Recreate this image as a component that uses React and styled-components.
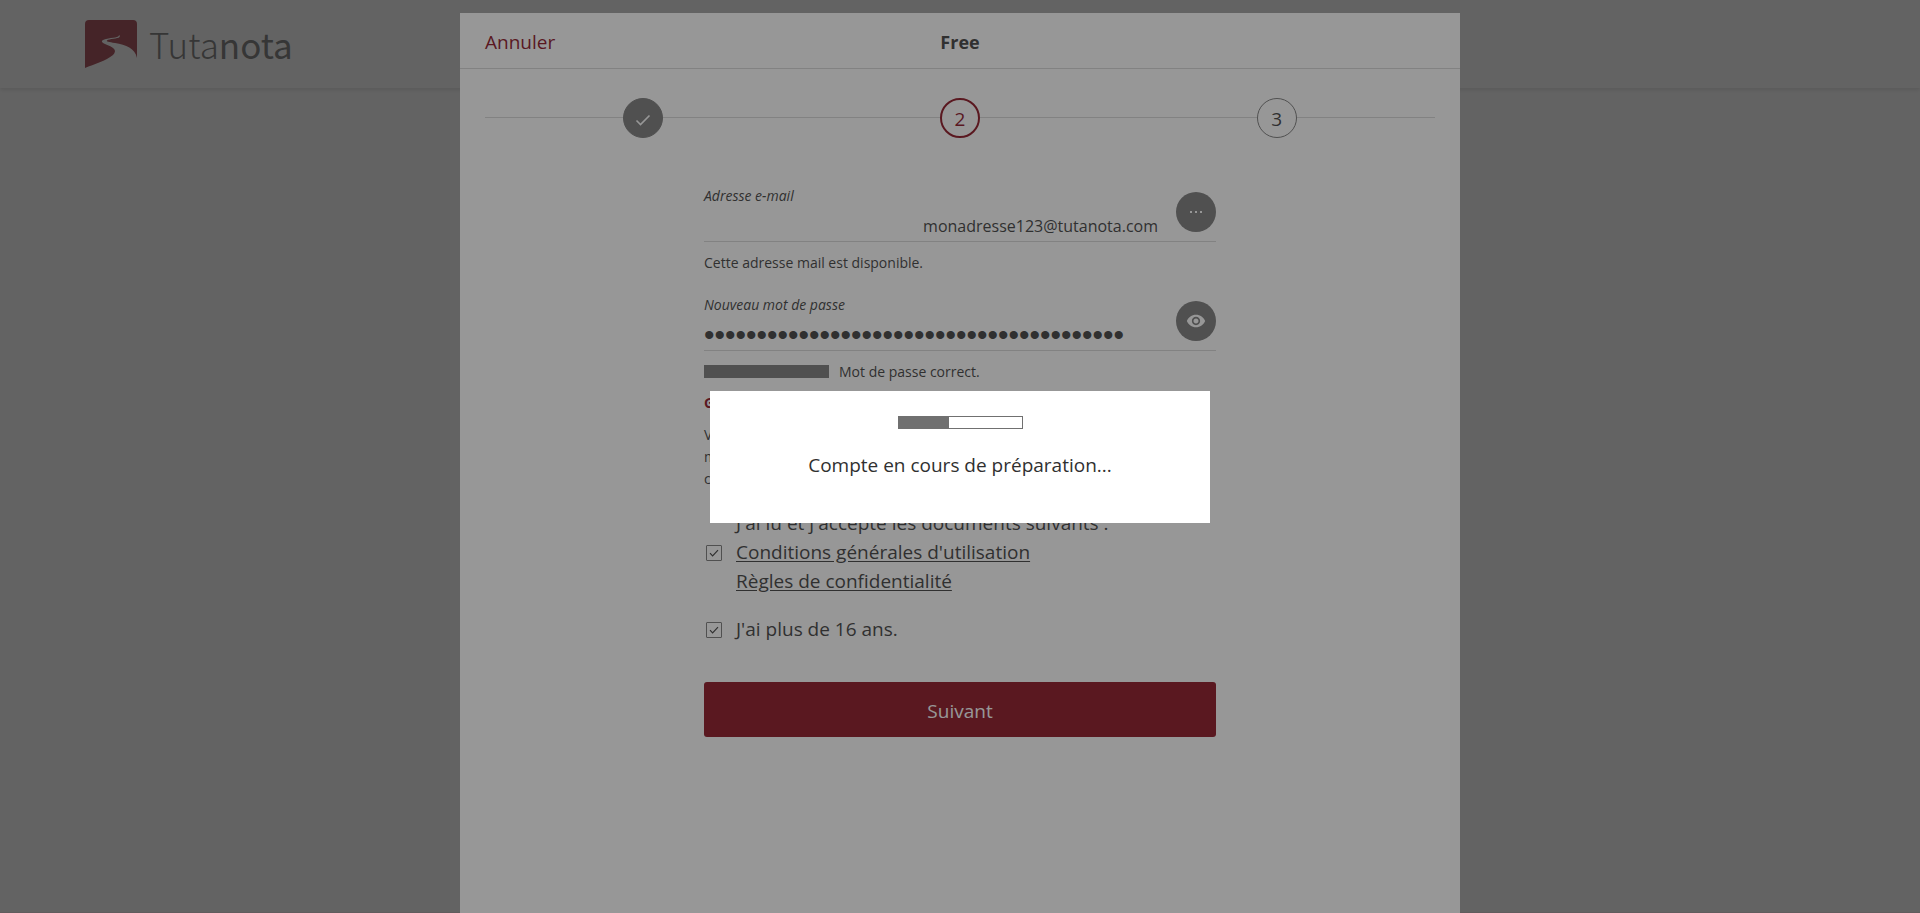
import React, { useState } from 'react';
import styled, { createGlobalStyle } from 'styled-components';

const colors = {
    accent: '#840010',
    text: '#303030',
    button: '#707070',
    line: '#d5d5d5',
    logoText: '#4a4a4a',
    shade: 'rgba(48, 48, 48, 0.5)',
};

const CheckIcon = ({ size }) => (
    <svg width={size} height={size} viewBox="0 0 20 20" fill="none" aria-hidden="true">
        <path d="M3.5 11.5L7.5 15.5L16.5 6.5" stroke="currentColor" strokeWidth="1.6" />
    </svg>
);

const SmallCheckIcon = () => (
    <svg width="12" height="12" viewBox="0 0 12 12" fill="none" aria-hidden="true">
        <path d="M2 6.2L4.6 8.8L10 3.2" stroke="currentColor" strokeWidth="1.2" />
    </svg>
);

const MoreIcon = () => (
    <svg width="20" height="20" viewBox="0 0 20 20" fill="currentColor" aria-hidden="true">
        <rect x="4" y="9" width="2" height="2" />
        <rect x="9" y="9" width="2" height="2" />
        <rect x="14" y="9" width="2" height="2" />
    </svg>
);

const EyeIcon = () => (
    <svg width="20" height="20" viewBox="0 0 24 24" fill="currentColor" aria-hidden="true">
        <path d="M12 4.5C7 4.5 2.73 7.61 1 12c1.73 4.39 6 7.5 11 7.5s9.27-3.11 11-7.5c-1.73-4.39-6-7.5-11-7.5zM12 17c-2.76 0-5-2.24-5-5s2.24-5 5-5 5 2.24 5 5-2.24 5-5 5zm0-8c-1.66 0-3 1.34-3 3s1.34 3 3 3 3-1.34 3-3-1.34-3-3-3z" />
    </svg>
);

const LogoMark = () => (
    <svg width="52" height="48" viewBox="0 0 52 48" fill={colors.accent} aria-hidden="true">
        <path d="M4 0H48Q52 0 52 4V38C50 28 41 25 30 23C24 22 21 21.500 22 20.500C24 18.500 33 19 34.500 17C35.300 16 34.500 15 34 15C34.500 17.500 28 17.500 21 19C16 20 15.500 22 20 24C28 27 33 30 28 35C21 41 9 44 0 48V4Q0 0 4 0Z" />
    </svg>
);

const App = () => {
    const [mail, setMail] = useState('monadresse123');
    const [password, setPassword] = useState('x'.repeat(40));
    const [terms, setTerms] = useState(true);
    const [age, setAge] = useState(true);

    return (
        <Page>
            <GlobalStyle />
            <TopBar>
                <LogoMark />
                <LogoText>
                    Tuta<b>nota</b>
                </LogoText>
            </TopBar>

            <Layer $top>
                <SignupDialog role="dialog" aria-label="Free">
                    <DialogHeader>
                        <CancelButton type="button">Annuler</CancelButton>
                        <DialogTitle>Free</DialogTitle>
                    </DialogHeader>
                    <Steps>
                        <Step>
                            <StepCircle $state="done"><CheckIcon size={20} /></StepCircle>
                        </Step>
                        <Step>
                            <StepCircle $state="current">2</StepCircle>
                        </Step>
                        <Step>
                            <StepCircle>3</StepCircle>
                        </Step>
                    </Steps>
                    <Form onSubmit={(e) => e.preventDefault()}>
                        <Field>
                            <FieldBody>
                                <Label htmlFor="mail">Adresse e-mail</Label>
                                <InputRow>
                                    <Input id="mail" $right value={mail} onChange={(e) => setMail(e.target.value)} />
                                    <Domain>@tutanota.com</Domain>
                                </InputRow>
                            </FieldBody>
                            <RoundButton type="button" aria-label="Plus"><MoreIcon /></RoundButton>
                        </Field>
                        <Helper>Cette adresse mail est disponible.</Helper>

                        <Field>
                            <FieldBody>
                                <Label htmlFor="password">Nouveau mot de passe</Label>
                                <InputRow>
                                    <PasswordInput
                                        id="password"
                                        type="password"
                                        value={password}
                                        onChange={(e) => setPassword(e.target.value)}
                                    />
                                </InputRow>
                            </FieldBody>
                            <RoundButton type="button" aria-label="Afficher"><EyeIcon /></RoundButton>
                        </Field>
                        <Helper>
                            <Meter><MeterFill style={{ width: '100%' }} /></Meter>
                            Mot de passe correct.
                        </Helper>

                        <WarningTitle>Gardez votre mot de passe !</WarningTitle>
                        <Warning>
                            Veuillez bien conserver votre mot de passe. Nous ne<br />
                            mémorisons pas votre mot de passe, il est donc<br />
                            conseillé de le noter.
                        </Warning>

                        <CheckRow>
                            <CheckBox>
                                <input type="checkbox" id="terms" checked={terms} onChange={() => setTerms(!terms)} />
                                {terms && <SmallCheckIcon />}
                            </CheckBox>
                            <CheckText>
                                <label htmlFor="terms">J'ai lu et j'accepte les documents suivants :</label>
                                <a href="#terms">Conditions générales d'utilisation</a>
                                <a href="#privacy">Règles de confidentialité</a>
                            </CheckText>
                        </CheckRow>
                        <CheckRow>
                            <CheckBox>
                                <input type="checkbox" id="age" checked={age} onChange={() => setAge(!age)} />
                                {age && <SmallCheckIcon />}
                            </CheckBox>
                            <CheckText>
                                <label htmlFor="age">J'ai plus de 16 ans.</label>
                            </CheckText>
                        </CheckRow>
                        <SubmitButton type="submit">Suivant</SubmitButton>
                    </Form>
                </SignupDialog>
            </Layer>

            <Layer>
                <ProgressDialog role="alertdialog" aria-label="Progression">
                    <Meter><MeterFill style={{ width: '41%' }} /></Meter>
                    <ProgressText>Compte en cours de préparation...</ProgressText>
                </ProgressDialog>
            </Layer>
        </Page>
    );
};

const GlobalStyle = createGlobalStyle`
    *, *::before, *::after {
        box-sizing: border-box;
    }

    body {
        margin: 0;
        overflow: hidden;
        background: #fff;
    }

    body, button, input {
        font-family: 'Open Sans', 'Noto Sans', sans-serif;
        font-size: 19px;
        color: ${colors.text};
    }

    button, input {
        margin: 0;
        padding: 0;
        border: none;
        background: none;
    }
`;

const Page = styled.div`
    min-height: 100vh;
    border-bottom: 1px solid #f5e0e4;
`;

const TopBar = styled.header`
    display: flex;
    align-items: center;
    gap: 12px;
    height: 88px;
    padding: 0 85px;
    box-shadow: 0 2px 4px rgba(0, 0, 0, 0.16);
`;

const LogoText = styled.span`
    font-family: 'Noto Sans CJK SC', 'Open Sans', sans-serif;
    font-size: 35px;
    line-height: 48px;
    font-weight: 300;
    color: ${colors.logoText};

    b {
        font-weight: 400;
    }
`;

const Layer = styled.div`
    position: fixed;
    inset: 0;
    display: flex;
    justify-content: center;
    align-items: ${props => props.$top ? 'stretch' : 'center'};
    padding-top: ${props => props.$top ? '13px' : '0'};
    background: ${colors.shade};
`;

const SignupDialog = styled.div`
    width: 100%;
    max-width: 1000px;
    background: #fff;
`;

const DialogHeader = styled.div`
    display: grid;
    grid-template-columns: 1fr auto 1fr;
    align-items: center;
    height: 56px;
    padding: 2px 25px 0;
    border-bottom: 1px solid ${colors.line};
`;

const CancelButton = styled.button`
    justify-self: start;
    color: ${colors.accent};
`;

const DialogTitle = styled.h1`
    margin: 0;
    font-size: 18px;
    font-weight: 700;
`;

const Steps = styled.div`
    display: grid;
    grid-template-columns: repeat(3, 1fr);
    margin: 29px 25px 0;
`;

const Step = styled.div`
    display: flex;
    align-items: center;

    &::before,
    &::after {
        content: '';
        flex: 1;
        height: 2px;
        border-top: 1px solid ${colors.line};
    }
`;

const stepBorders = {
    done: `1px solid ${colors.button}`,
    current: `2px solid ${colors.accent}`,
};

const StepCircle = styled.div`
    display: flex;
    align-items: center;
    justify-content: center;
    width: 40px;
    height: 40px;
    padding-top: 2px;
    border: ${props => stepBorders[props.$state] || `1px solid ${colors.button}`};
    border-radius: 50%;
    background: ${props => props.$state === 'done' ? colors.button : 'transparent'};
    color: ${props => props.$state === 'done' ? '#fff' : props.$state === 'current' ? colors.accent : colors.text};
`;

const Form = styled.form`
    display: flex;
    flex-direction: column;
    max-width: 512px;
    margin: 48px auto 0;
`;

const Field = styled.div`
    display: flex;
    align-items: flex-start;
    gap: 18px;
    height: 56px;
    padding-top: 6px;
    border-bottom: 1px solid ${colors.line};
`;

const FieldBody = styled.div`
    flex: 1;
    margin-top: -6px;
`;

const Label = styled.label`
    display: block;
    font-size: 14px;
    line-height: 20px;
    font-style: italic;
`;

const InputRow = styled.div`
    display: flex;
    align-items: center;
    height: 30px;
    margin-top: 5px;
`;

const Input = styled.input`
    flex: 1;
    min-width: 0;
    height: 30px;
    outline: none;
    font-size: 16px;
    text-align: ${props => props.$right ? 'right' : 'left'};
`;

const PasswordInput = styled(Input)`
    font-family: 'Liberation Sans', Arial, sans-serif;
    font-size: 30px;
`;

const Domain = styled.span`
    font-size: 16px;
`;

const RoundButton = styled.button`
    display: flex;
    align-items: center;
    justify-content: center;
    width: 40px;
    height: 40px;
    border-radius: 50%;
    background: ${colors.button};
    color: #fff;
`;

const Helper = styled.div`
    display: flex;
    align-items: center;
    gap: 10px;
    height: 20px;
    margin: 10px 0 23px;
    font-size: 14px;
`;

const Meter = styled.div`
    width: 125px;
    height: 13px;
    border: 1px solid ${colors.button};
`;

const MeterFill = styled.div`
    height: 100%;
    background: ${colors.button};
`;

const WarningTitle = styled.div`
    margin-top: -12px;
    font-size: 14px;
    line-height: 22px;
    font-weight: 700;
    color: ${colors.accent};
`;

const Warning = styled.p`
    margin: 10px 0 0;
    font-size: 14px;
    line-height: 22px;
`;

const CheckRow = styled.div`
    display: flex;
    align-items: center;
    gap: 14px;
    margin-top: 19px;
    padding-left: 2px;
`;

const CheckBox = styled.span`
    position: relative;
    width: 16px;
    height: 16px;

    input {
        display: block;
        width: 16px;
        height: 16px;
        appearance: none;
        border: 1px solid ${colors.button};
        border-radius: 1px;
    }

    svg {
        position: absolute;
        inset: 2px;
        pointer-events: none;
    }
`;

const CheckText = styled.div`
    display: flex;
    flex-direction: column;
    align-items: flex-start;
    line-height: 29px;

    a {
        color: inherit;
        text-underline-offset: 2px;
    }
`;

const SubmitButton = styled.button`
    height: 55px;
    margin-top: 38px;
    padding-top: 2px;
    border-radius: 3px;
    background: ${colors.accent};
    color: #fff;
`;

const ProgressDialog = styled.div`
    display: flex;
    flex-direction: column;
    align-items: center;
    width: 500px;
    max-width: 100%;
    padding: 25px 25px 43px;
    background: #fff;
`;

const ProgressText = styled.p`
    margin: 22px 0 0;
    line-height: 29px;
`;

export default App;
